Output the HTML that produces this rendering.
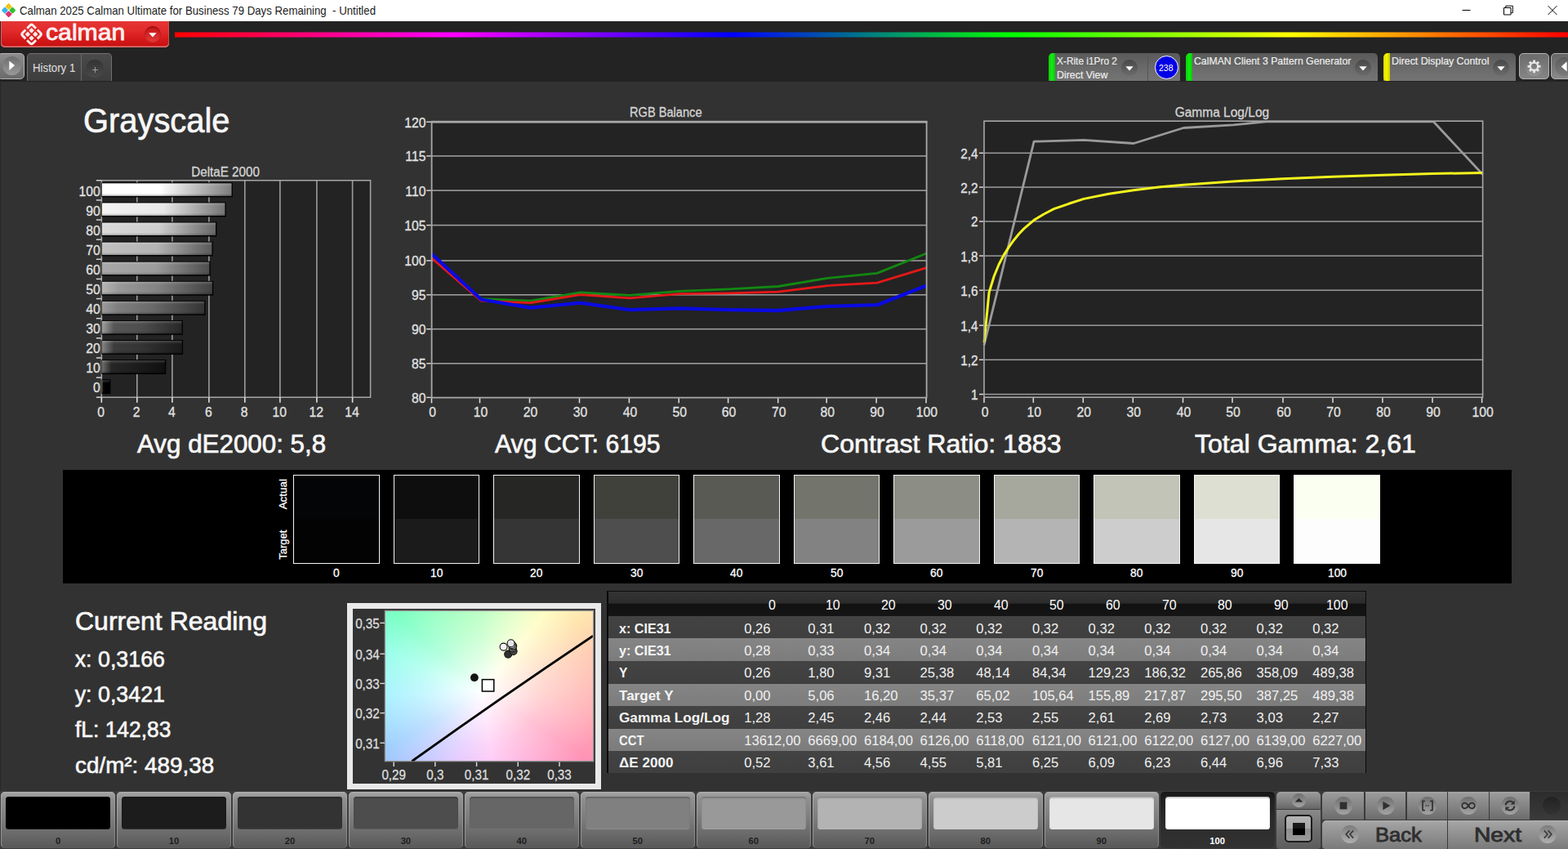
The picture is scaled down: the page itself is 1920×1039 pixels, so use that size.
<!DOCTYPE html>
<html lang="en"><head><meta charset="utf-8"><title>Calman 2025 - Grayscale</title>
<style>
*{margin:0;padding:0}
html,body{width:1920px;height:1039px;overflow:hidden;background:#323232}
body{position:relative;font-family:"Liberation Sans",sans-serif;-webkit-font-smoothing:antialiased}
.abs{position:absolute;display:block}
.t{position:absolute;white-space:nowrap;transform-origin:0 50%}
svg{position:absolute;overflow:visible}
svg text{font-family:"Liberation Sans",sans-serif}
#titlebar{position:absolute;left:0;top:0;width:1920px;height:25.6px;background:#fff}
#hdr{position:absolute;left:0;top:25.6px;width:1920px;height:74.2px;background:#232323}
#rainbow{position:absolute;left:214.3px;top:39px;width:1705.7px;height:7.2px;
 background:linear-gradient(rgba(35,35,35,.75) 0,rgba(35,35,35,0) 17%,rgba(35,35,35,0) 83%,rgba(35,35,35,.75) 100%),linear-gradient(90deg,#ff0000 0%,#ff00ff 20%,#0000ff 40%,#00ff00 60%,#ffff00 80%,#ff0000 100%)}
#redbtn{position:absolute;left:1px;top:25.6px;width:205.6px;height:32.9px;border-radius:0 0 5px 5px;
 background:linear-gradient(#e43535 0%,#e32b2b 35%,#d41919 70%,#c51010 100%);
 box-shadow:inset 0 -1.5px 0 #e07878, inset 1px 0 0 #e86060, inset -1px 0 0 #d05050}
#ledge{position:absolute;left:0;top:100px;width:1px;height:868px;background:#282828}

.pb{position:absolute;top:969.2px;height:69px;width:140px;border-radius:5px;box-sizing:border-box;
 background:linear-gradient(#b2b2b2 0,#a0a0a0 3%,#8f8f8f 12%,#7e7e7e 45%,#6a6a6a 75%,#585858 100%);
 box-shadow:inset 1.5px 0 1px -0.5px rgba(190,190,190,.55),inset -1.5px 0 1px -0.5px rgba(190,190,190,.4)}
.pb.sel{background:linear-gradient(#161616 0,#1f1f1f 12%,#2b2b2b 50%,#323232 100%);box-shadow:none}
.sw{position:absolute;top:974.9px;height:40.2px;width:128px;border-radius:3.5px;box-shadow:inset 0 1.5px 1.5px rgba(0,0,0,.28),inset 0 -1px 1px rgba(255,255,255,.10)}
.cb{position:absolute;box-sizing:border-box;background:linear-gradient(#a6a6a6 0,#969696 10%,#808080 55%,#666 100%)}
.cc{position:absolute;border-radius:50%;background:linear-gradient(#6e6e6e,#a4a4a4)}
</style></head>
<body>
<!-- p1_top -->
<div id="titlebar"></div>
<svg class="abs" style="left:0;top:0" width="26" height="26" viewBox="0 0 26 26">
<g transform="translate(10.6,12.6) rotate(45) scale(1.0)">
<rect x="-6.3" y="-6.3" width="6" height="6" rx="1" fill="#f2c315"/>
<rect x="0.3" y="-6.3" width="6" height="6" rx="1" fill="#2fc12f"/>
<rect x="-6.3" y="0.3" width="6" height="6" rx="1" fill="#35b4ee"/>
<rect x="0.3" y="0.3" width="6" height="6" rx="1" fill="#e52f6f"/>
</g></svg>
<div class="t" style="left:23.60px;top:5.58px;font-size:14.20px;line-height:14.20px;color:#1c1c1c;transform:scaleX(0.9324);white-space:pre;">Calman 2025 Calman Ultimate for Business 79 Days Remaining  - Untitled</div>
<svg class="abs" style="left:1760px;top:0" width="160" height="26" viewBox="0 0 160 26" fill="none" stroke="#000" stroke-width="1">
<path d="M30.5 12.5h10"/>
<path d="M81.5 9.5h8.5v8.5h-8.5z M83.8 9.5v-2.3h8.5v8.5h-2.3"/>
<path d="M135.6 7.2l10.8 10.8 M146.4 7.2l-10.8 10.8"/>
</svg>
<div id="hdr"></div>
<div id="ledge"></div>
<div id="rainbow"></div>
<div id="redbtn"></div>
<svg class="abs" style="left:20px;top:26px" width="40" height="33" viewBox="0 0 40 33">
<g transform="translate(18.6,15.95) rotate(45)" fill="#ffecec">
<path d="M1.25 -8.95L6.55 -8.95Q8.95 -8.95 8.95 -6.55L8.95 -1.25 M1.25 8.95L6.55 8.95Q8.95 8.95 8.95 6.55L8.95 1.25 M-1.25 8.95L-6.55 8.95Q-8.95 8.95 -8.95 6.55L-8.95 1.25 M-1.25 -8.95L-6.55 -8.95Q-8.95 -8.95 -8.95 -6.55L-8.95 -1.25" fill="none" stroke="#ffecec" stroke-width="2.9" stroke-linejoin="round" stroke-linecap="butt"/>
<rect x="-5.65" y="-5.65" width="4.70" height="4.70" rx="1"/><rect x="0.95" y="-5.65" width="4.70" height="4.70" rx="1"/><rect x="-5.65" y="0.95" width="4.70" height="4.70" rx="1"/><rect x="0.95" y="0.95" width="4.70" height="4.70" rx="1"/>
</g></svg>
<div class="t" style="left:56.40px;top:25.03px;font-size:28.20px;line-height:28.20px;color:#fff0f0;-webkit-text-stroke:0.8px #fff0f0;transform:scaleX(1.0714);">calman</div>
<div class="abs" style="left:177px;top:32px;width:20px;height:20px;border-radius:50%;background:linear-gradient(#c41414,#e23a3a);box-shadow:inset 0 1px 2px rgba(80,0,0,.5)"></div>
<svg class="abs" style="left:177px;top:32px" width="20" height="20"><path d="M5.3 8.2h9.4l-4.7 5.2z" fill="#fff"/></svg>
<div class="abs" style="left:-3px;top:65px;width:33.4px;height:31.8px;border-radius:5px;background:linear-gradient(#8d8d8d,#6a6a6a);border:1.6px solid #b4b4b4;box-sizing:border-box"></div>
<div class="abs" style="left:3px;top:69px;width:23px;height:23px;border-radius:50%;background:linear-gradient(#6e6e6e,#999)"></div>
<svg class="abs" style="left:3px;top:69px" width="23" height="23"><path d="M8.3 5.4l6.8 5.7-6.8 5.9z" fill="#fff"/></svg>
<div class="abs" style="left:33px;top:65px;width:104px;height:34.2px;border-radius:5px 5px 0 0;background:linear-gradient(#4a4a4a,#3d3d3d);border:1.7px solid #707070;border-bottom:none;box-sizing:border-box"></div>
<div class="abs" style="left:98.5px;top:66px;width:1.5px;height:33px;background:#6a6a6a"></div>
<div class="t" style="left:40.20px;top:76.10px;font-size:14.30px;line-height:14.30px;color:#dadada;-webkit-text-stroke:0.15px #dadada;transform:scaleX(0.9270);">History 1</div>
<div class="abs" style="left:105px;top:73px;width:22px;height:22px;border-radius:50%;background:linear-gradient(#333,#4a4a4a)"></div>
<svg class="abs" style="left:105px;top:73px" width="22" height="22"><path d="M11.5 9v7M8 12.5h7" stroke="#9a9a9a" stroke-width="1.1" fill="none"/></svg>
<div class="abs" style="left:1283.8px;top:65px;width:161.5px;height:34px;border-radius:5px 5px 0 0;background:linear-gradient(#595959,#6c6c6c 60%,#747474);overflow:hidden"><div style="position:absolute;left:0;top:0;width:8px;height:100%;border-radius:5px 0 0 4px;background:linear-gradient(90deg,#0cc80c,#10f010 50%,#0cc40c)"></div></div><div class="t" style="left:1294.00px;top:69.06px;font-size:12.10px;line-height:12.10px;color:#ececec;-webkit-text-stroke:0.2px #ececec;transform:scaleX(0.9825);">X-Rite i1Pro 2</div><div class="t" style="left:1294.00px;top:85.86px;font-size:12.10px;line-height:12.10px;color:#ececec;-webkit-text-stroke:0.2px #ececec;transform:scaleX(1.0251);">Direct View</div><div class="abs" style="left:1373px;top:72.5px;width:20px;height:20px;border-radius:50%;background:linear-gradient(#484848,#6c6c6c)"></div><svg class="abs" style="left:1373px;top:72.5px" width="20" height="20"><path d="M5.3 8.2h9.4l-4.7 5.2z" fill="#fff"/></svg>
<div class="abs" style="left:1404.5px;top:68px;width:1.5px;height:31px;background:#555"></div>
<div class="abs" style="left:1413.5px;top:67.5px;width:29px;height:29px;border-radius:50%;background:#0000e6;border:1.3px solid #fff;box-sizing:border-box"></div>
<div class="t" style="left:1419.25px;top:76.78px;font-size:11.60px;line-height:11.60px;color:#fff;transform:scaleX(0.9042);">238</div>
<div class="abs" style="left:1451.9px;top:65px;width:235.1px;height:34px;border-radius:5px 5px 0 0;background:linear-gradient(#595959,#6c6c6c 60%,#747474);overflow:hidden"><div style="position:absolute;left:0;top:0;width:8px;height:100%;border-radius:5px 0 0 4px;background:linear-gradient(90deg,#0cc80c,#10f010 50%,#0cc40c)"></div></div><div class="t" style="left:1462.10px;top:69.06px;font-size:12.10px;line-height:12.10px;color:#ececec;-webkit-text-stroke:0.2px #ececec;transform:scaleX(1.0150);">CalMAN Client 3 Pattern Generator</div><div class="abs" style="left:1659px;top:72.5px;width:20px;height:20px;border-radius:50%;background:linear-gradient(#484848,#6c6c6c)"></div><svg class="abs" style="left:1659px;top:72.5px" width="20" height="20"><path d="M5.3 8.2h9.4l-4.7 5.2z" fill="#fff"/></svg>
<div class="abs" style="left:1694px;top:65px;width:162px;height:34px;border-radius:5px 5px 0 0;background:linear-gradient(#595959,#6c6c6c 60%,#747474);overflow:hidden"><div style="position:absolute;left:0;top:0;width:8px;height:100%;border-radius:5px 0 0 4px;background:linear-gradient(90deg,#d8d800,#f6f600 50%,#c8c800)"></div></div><div class="t" style="left:1704.20px;top:69.06px;font-size:12.10px;line-height:12.10px;color:#ececec;-webkit-text-stroke:0.2px #ececec;transform:scaleX(1.0213);">Direct Display Control</div><div class="abs" style="left:1827.5px;top:72.5px;width:20px;height:20px;border-radius:50%;background:linear-gradient(#484848,#6c6c6c)"></div><svg class="abs" style="left:1827.5px;top:72.5px" width="20" height="20"><path d="M5.3 8.2h9.4l-4.7 5.2z" fill="#fff"/></svg>
<div class="abs" style="left:1860px;top:65px;width:37px;height:32px;border-radius:5px;background:linear-gradient(#6c6c6c,#858585);border:1.5px solid #b4b4b4;box-sizing:border-box"></div>
<div class="abs" style="left:1867px;top:69.5px;width:23px;height:23px;border-radius:50%;background:linear-gradient(#6a6a6a,#929292)"></div>
<svg class="abs" style="left:1867px;top:69.5px" width="23" height="23" viewBox="-11.5 -11.5 23 23">
<g fill="#e6e6e6" transform="translate(0,-0.2)"><circle r="4.7" fill="none" stroke="#e6e6e6" stroke-width="2.3"/>
<rect x="-1.5" y="-7.9" width="3" height="2.6" rx=".4" transform="rotate(0)"/><rect x="-1.5" y="-7.9" width="3" height="2.6" rx=".4" transform="rotate(45)"/><rect x="-1.5" y="-7.9" width="3" height="2.6" rx=".4" transform="rotate(90)"/><rect x="-1.5" y="-7.9" width="3" height="2.6" rx=".4" transform="rotate(135)"/><rect x="-1.5" y="-7.9" width="3" height="2.6" rx=".4" transform="rotate(180)"/><rect x="-1.5" y="-7.9" width="3" height="2.6" rx=".4" transform="rotate(225)"/><rect x="-1.5" y="-7.9" width="3" height="2.6" rx=".4" transform="rotate(270)"/><rect x="-1.5" y="-7.9" width="3" height="2.6" rx=".4" transform="rotate(315)"/>
</g></svg>
<div class="abs" style="left:1899px;top:65px;width:33px;height:32px;border-radius:5px;background:linear-gradient(#666,#8a8a8a);border:1.5px solid #b0b0b0;box-sizing:border-box"></div>
<div class="abs" style="left:1903.5px;top:69.5px;width:23px;height:23px;border-radius:50%;background:linear-gradient(#5c5c5c,#7c7c7c)"></div>
<svg class="abs" style="left:1903.5px;top:69.5px" width="17" height="23"><path d="M14.6 5.2v12.4l-6.8-6.2z" fill="#fff"/></svg>
<!-- p2_charts -->
<div class="t" style="left:101.80px;top:126.58px;font-size:42.20px;line-height:42.20px;color:#f7f7f7;-webkit-text-stroke:0.7px #f7f7f7;transform:scaleX(0.9454);">Grayscale</div>
<div class="t" style="left:168.30px;top:528.40px;font-size:30.60px;line-height:30.60px;color:#f7f7f7;-webkit-text-stroke:0.7px #f7f7f7;transform:scaleX(1.0243);">Avg dE2000: 5,8</div>
<div class="t" style="left:605.90px;top:528.40px;font-size:30.60px;line-height:30.60px;color:#f7f7f7;-webkit-text-stroke:0.7px #f7f7f7;transform:scaleX(0.9871);">Avg CCT: 6195</div>
<div class="t" style="left:1004.60px;top:528.40px;font-size:30.60px;line-height:30.60px;color:#f7f7f7;-webkit-text-stroke:0.7px #f7f7f7;transform:scaleX(1.0497);">Contrast Ratio: 1883</div>
<div class="t" style="left:1463.30px;top:528.40px;font-size:30.60px;line-height:30.60px;color:#f7f7f7;-webkit-text-stroke:0.7px #f7f7f7;transform:scaleX(1.0483);">Total Gamma: 2,61</div>
<svg class="abs" style="left:0;top:0" width="1920" height="1039" viewBox="0 0 1920 1039">
<defs>
<linearGradient id="bg0" x1="0" x2="1" y1="0" y2="0"><stop offset="0" stop-color="rgb(255,255,255)"/><stop offset="0.45" stop-color="rgb(255,255,255)"/><stop offset="1" stop-color="rgb(125,125,125)"/></linearGradient>
<linearGradient id="bg1" x1="0" x2="1" y1="0" y2="0"><stop offset="0" stop-color="rgb(244,244,244)"/><stop offset="0.15" stop-color="rgb(240,240,240)"/><stop offset="0.5" stop-color="rgb(232,232,232)"/><stop offset="1" stop-color="rgb(116,116,116)"/></linearGradient>
<linearGradient id="bg2" x1="0" x2="1" y1="0" y2="0"><stop offset="0" stop-color="rgb(218,218,218)"/><stop offset="0.15" stop-color="rgb(214,214,214)"/><stop offset="0.5" stop-color="rgb(206,206,206)"/><stop offset="1" stop-color="rgb(103,103,103)"/></linearGradient>
<linearGradient id="bg3" x1="0" x2="1" y1="0" y2="0"><stop offset="0" stop-color="rgb(192,192,192)"/><stop offset="0.15" stop-color="rgb(188,188,188)"/><stop offset="0.5" stop-color="rgb(180,180,180)"/><stop offset="1" stop-color="rgb(90,90,90)"/></linearGradient>
<linearGradient id="bg4" x1="0" x2="1" y1="0" y2="0"><stop offset="0" stop-color="rgb(168,168,168)"/><stop offset="0.15" stop-color="rgb(164,164,164)"/><stop offset="0.5" stop-color="rgb(156,156,156)"/><stop offset="1" stop-color="rgb(78,78,78)"/></linearGradient>
<linearGradient id="bg5" x1="0" x2="1" y1="0" y2="0"><stop offset="0" stop-color="rgb(181,181,181)"/><stop offset="0.15" stop-color="rgb(153,153,153)"/><stop offset="0.5" stop-color="rgb(131,131,131)"/><stop offset="1" stop-color="rgb(65,65,65)"/></linearGradient>
<linearGradient id="bg6" x1="0" x2="1" y1="0" y2="0"><stop offset="0" stop-color="rgb(155,155,155)"/><stop offset="0.15" stop-color="rgb(127,127,127)"/><stop offset="0.5" stop-color="rgb(105,105,105)"/><stop offset="1" stop-color="rgb(52,52,52)"/></linearGradient>
<linearGradient id="bg7" x1="0" x2="1" y1="0" y2="0"><stop offset="0" stop-color="rgb(158,158,158)"/><stop offset="0.15" stop-color="rgb(86,86,86)"/><stop offset="0.5" stop-color="rgb(78,78,78)"/><stop offset="1" stop-color="rgb(39,39,39)"/></linearGradient>
<linearGradient id="bg8" x1="0" x2="1" y1="0" y2="0"><stop offset="0" stop-color="rgb(132,132,132)"/><stop offset="0.15" stop-color="rgb(60,60,60)"/><stop offset="0.5" stop-color="rgb(52,52,52)"/><stop offset="1" stop-color="rgb(26,26,26)"/></linearGradient>
<linearGradient id="bg9" x1="0" x2="1" y1="0" y2="0"><stop offset="0" stop-color="rgb(110,110,110)"/><stop offset="0.15" stop-color="rgb(38,38,38)"/><stop offset="0.5" stop-color="rgb(30,30,30)"/><stop offset="1" stop-color="rgb(15,15,15)"/></linearGradient>
<linearGradient id="bg10" x1="0" x2="1" y1="0" y2="0"><stop offset="0" stop-color="rgb(80,80,80)"/><stop offset="0.15" stop-color="rgb(8,8,8)"/><stop offset="0.5" stop-color="rgb(0,0,0)"/><stop offset="1" stop-color="rgb(0,0,0)"/></linearGradient>
<linearGradient id="bsh" x1="0" x2="0" y1="0" y2="1"><stop offset="0" stop-color="#fff" stop-opacity=".18"/><stop offset=".25" stop-color="#fff" stop-opacity="0"/><stop offset=".8" stop-color="#000" stop-opacity="0"/><stop offset="1" stop-color="#000" stop-opacity=".22"/></linearGradient>
</defs>
<rect x="124.40" y="220.80" width="329.20" height="265.40" fill="#232323"/>
<rect x="167.00" y="220.80" width="1.6" height="265.40" fill="#9c9c9c"/>
<rect x="210.10" y="220.80" width="1.6" height="265.40" fill="#9c9c9c"/>
<rect x="255.10" y="220.80" width="1.6" height="265.40" fill="#9c9c9c"/>
<rect x="299.00" y="220.80" width="1.6" height="265.40" fill="#9c9c9c"/>
<rect x="342.10" y="220.80" width="1.6" height="265.40" fill="#9c9c9c"/>
<rect x="387.10" y="220.80" width="1.6" height="265.40" fill="#9c9c9c"/>
<rect x="430.80" y="220.80" width="1.6" height="265.40" fill="#9c9c9c"/>
<rect x="124.40" y="220.80" width="329.20" height="265.40" fill="none" stroke="#a8a8a8" stroke-width="1.5"/>
<rect x="124.40" y="223.40" width="160.47" height="17.90" fill="#000"/>
<rect x="125.00" y="224.40" width="158.57" height="15.40" fill="url(#bg0)"/>
<rect x="125.00" y="224.40" width="158.57" height="15.40" fill="url(#bsh)"/>
<rect x="124.40" y="247.48" width="152.35" height="17.90" fill="#000"/>
<rect x="125.00" y="248.48" width="150.45" height="15.40" fill="url(#bg1)"/>
<rect x="125.00" y="248.48" width="150.45" height="15.40" fill="url(#bsh)"/>
<rect x="124.40" y="271.56" width="140.94" height="17.90" fill="#000"/>
<rect x="125.00" y="272.56" width="139.04" height="15.40" fill="url(#bg2)"/>
<rect x="125.00" y="272.56" width="139.04" height="15.40" fill="url(#bsh)"/>
<rect x="124.40" y="295.64" width="136.33" height="17.90" fill="#000"/>
<rect x="125.00" y="296.64" width="134.43" height="15.40" fill="url(#bg3)"/>
<rect x="125.00" y="296.64" width="134.43" height="15.40" fill="url(#bsh)"/>
<rect x="124.40" y="319.72" width="133.26" height="17.90" fill="#000"/>
<rect x="125.00" y="320.72" width="131.36" height="15.40" fill="url(#bg4)"/>
<rect x="125.00" y="320.72" width="131.36" height="15.40" fill="url(#bsh)"/>
<rect x="124.40" y="343.80" width="136.77" height="17.90" fill="#000"/>
<rect x="125.00" y="344.80" width="134.87" height="15.40" fill="url(#bg5)"/>
<rect x="125.00" y="344.80" width="134.87" height="15.40" fill="url(#bsh)"/>
<rect x="124.40" y="367.88" width="127.11" height="17.90" fill="#000"/>
<rect x="125.00" y="368.88" width="125.21" height="15.40" fill="url(#bg6)"/>
<rect x="125.00" y="368.88" width="125.21" height="15.40" fill="url(#bsh)"/>
<rect x="124.40" y="391.96" width="99.46" height="17.90" fill="#000"/>
<rect x="125.00" y="392.96" width="97.56" height="15.40" fill="url(#bg7)"/>
<rect x="125.00" y="392.96" width="97.56" height="15.40" fill="url(#bsh)"/>
<rect x="124.40" y="416.04" width="99.68" height="17.90" fill="#000"/>
<rect x="125.00" y="417.04" width="97.78" height="15.40" fill="url(#bg8)"/>
<rect x="125.00" y="417.04" width="97.78" height="15.40" fill="url(#bsh)"/>
<rect x="124.40" y="440.12" width="78.83" height="17.90" fill="#000"/>
<rect x="125.00" y="441.12" width="76.93" height="15.40" fill="url(#bg9)"/>
<rect x="125.00" y="441.12" width="76.93" height="15.40" fill="url(#bsh)"/>
<rect x="124.40" y="464.20" width="11.01" height="17.90" fill="#000"/>
<rect x="125.00" y="465.20" width="9.11" height="15.40" fill="url(#bg10)"/>
<rect x="125.00" y="465.20" width="9.11" height="15.40" fill="url(#bsh)"/>
<rect x="117.90" y="220.10" width="6" height="1.4" fill="#e0e0e0"/>
<rect x="117.90" y="244.23" width="6" height="1.4" fill="#e0e0e0"/>
<rect x="117.90" y="268.35" width="6" height="1.4" fill="#e0e0e0"/>
<rect x="117.90" y="292.48" width="6" height="1.4" fill="#e0e0e0"/>
<rect x="117.90" y="316.61" width="6" height="1.4" fill="#e0e0e0"/>
<rect x="117.90" y="340.74" width="6" height="1.4" fill="#e0e0e0"/>
<rect x="117.90" y="364.86" width="6" height="1.4" fill="#e0e0e0"/>
<rect x="117.90" y="388.99" width="6" height="1.4" fill="#e0e0e0"/>
<rect x="117.90" y="413.12" width="6" height="1.4" fill="#e0e0e0"/>
<rect x="117.90" y="437.25" width="6" height="1.4" fill="#e0e0e0"/>
<rect x="117.90" y="461.37" width="6" height="1.4" fill="#e0e0e0"/>
<rect x="117.90" y="485.50" width="6" height="1.4" fill="#e0e0e0"/>
<text x="122.80" y="239.70" font-size="17.20" fill="#e2e2e2" text-anchor="end" stroke="#e2e2e2" stroke-width="0.3" textLength="26.26" lengthAdjust="spacingAndGlyphs" >100</text>
<text x="122.80" y="263.76" font-size="17.20" fill="#e2e2e2" text-anchor="end" stroke="#e2e2e2" stroke-width="0.3" textLength="17.51" lengthAdjust="spacingAndGlyphs" >90</text>
<text x="122.80" y="287.82" font-size="17.20" fill="#e2e2e2" text-anchor="end" stroke="#e2e2e2" stroke-width="0.3" textLength="17.51" lengthAdjust="spacingAndGlyphs" >80</text>
<text x="122.80" y="311.88" font-size="17.20" fill="#e2e2e2" text-anchor="end" stroke="#e2e2e2" stroke-width="0.3" textLength="17.51" lengthAdjust="spacingAndGlyphs" >70</text>
<text x="122.80" y="335.94" font-size="17.20" fill="#e2e2e2" text-anchor="end" stroke="#e2e2e2" stroke-width="0.3" textLength="17.51" lengthAdjust="spacingAndGlyphs" >60</text>
<text x="122.80" y="360.00" font-size="17.20" fill="#e2e2e2" text-anchor="end" stroke="#e2e2e2" stroke-width="0.3" textLength="17.51" lengthAdjust="spacingAndGlyphs" >50</text>
<text x="122.80" y="384.06" font-size="17.20" fill="#e2e2e2" text-anchor="end" stroke="#e2e2e2" stroke-width="0.3" textLength="17.51" lengthAdjust="spacingAndGlyphs" >40</text>
<text x="122.80" y="408.12" font-size="17.20" fill="#e2e2e2" text-anchor="end" stroke="#e2e2e2" stroke-width="0.3" textLength="17.51" lengthAdjust="spacingAndGlyphs" >30</text>
<text x="122.80" y="432.18" font-size="17.20" fill="#e2e2e2" text-anchor="end" stroke="#e2e2e2" stroke-width="0.3" textLength="17.51" lengthAdjust="spacingAndGlyphs" >20</text>
<text x="122.80" y="456.24" font-size="17.20" fill="#e2e2e2" text-anchor="end" stroke="#e2e2e2" stroke-width="0.3" textLength="17.51" lengthAdjust="spacingAndGlyphs" >10</text>
<text x="122.80" y="480.30" font-size="17.20" fill="#e2e2e2" text-anchor="end" stroke="#e2e2e2" stroke-width="0.3" textLength="8.75" lengthAdjust="spacingAndGlyphs" >0</text>
<rect x="123.50" y="486.20" width="1.6" height="6.5" fill="#e0e0e0"/>
<text x="123.70" y="510.00" font-size="17.20" fill="#e2e2e2" text-anchor="middle" stroke="#e2e2e2" stroke-width="0.3" textLength="8.75" lengthAdjust="spacingAndGlyphs" >0</text>
<rect x="167.00" y="486.20" width="1.6" height="6.5" fill="#e0e0e0"/>
<text x="167.20" y="510.00" font-size="17.20" fill="#e2e2e2" text-anchor="middle" stroke="#e2e2e2" stroke-width="0.3" textLength="8.75" lengthAdjust="spacingAndGlyphs" >2</text>
<rect x="210.10" y="486.20" width="1.6" height="6.5" fill="#e0e0e0"/>
<text x="210.30" y="510.00" font-size="17.20" fill="#e2e2e2" text-anchor="middle" stroke="#e2e2e2" stroke-width="0.3" textLength="8.75" lengthAdjust="spacingAndGlyphs" >4</text>
<rect x="255.10" y="486.20" width="1.6" height="6.5" fill="#e0e0e0"/>
<text x="255.30" y="510.00" font-size="17.20" fill="#e2e2e2" text-anchor="middle" stroke="#e2e2e2" stroke-width="0.3" textLength="8.75" lengthAdjust="spacingAndGlyphs" >6</text>
<rect x="299.00" y="486.20" width="1.6" height="6.5" fill="#e0e0e0"/>
<text x="299.20" y="510.00" font-size="17.20" fill="#e2e2e2" text-anchor="middle" stroke="#e2e2e2" stroke-width="0.3" textLength="8.75" lengthAdjust="spacingAndGlyphs" >8</text>
<rect x="342.10" y="486.20" width="1.6" height="6.5" fill="#e0e0e0"/>
<text x="342.30" y="510.00" font-size="17.20" fill="#e2e2e2" text-anchor="middle" stroke="#e2e2e2" stroke-width="0.3" textLength="17.51" lengthAdjust="spacingAndGlyphs" >10</text>
<rect x="387.10" y="486.20" width="1.6" height="6.5" fill="#e0e0e0"/>
<text x="387.30" y="510.00" font-size="17.20" fill="#e2e2e2" text-anchor="middle" stroke="#e2e2e2" stroke-width="0.3" textLength="17.51" lengthAdjust="spacingAndGlyphs" >12</text>
<rect x="430.80" y="486.20" width="1.6" height="6.5" fill="#e0e0e0"/>
<text x="431.00" y="510.00" font-size="17.20" fill="#e2e2e2" text-anchor="middle" stroke="#e2e2e2" stroke-width="0.3" textLength="17.51" lengthAdjust="spacingAndGlyphs" >14</text>
<text x="276.10" y="215.80" font-size="15.60" fill="#d4d4d4" text-anchor="middle" stroke="#d4d4d4" stroke-width="0.3" textLength="83.80" lengthAdjust="spacingAndGlyphs" >DeltaE 2000</text>
</svg>
<svg class="abs" style="left:0;top:0" width="1920" height="1039" viewBox="0 0 1920 1039">
<rect x="528.60" y="149.40" width="606.00" height="337.20" fill="#232323"/>
<rect x="528.60" y="444.00" width="606.00" height="1.6" fill="#9c9c9c"/>
<rect x="528.60" y="401.90" width="606.00" height="1.6" fill="#9c9c9c"/>
<rect x="528.60" y="360.00" width="606.00" height="1.6" fill="#9c9c9c"/>
<rect x="528.60" y="318.20" width="606.00" height="1.6" fill="#9c9c9c"/>
<rect x="528.60" y="274.80" width="606.00" height="1.6" fill="#9c9c9c"/>
<rect x="528.60" y="232.30" width="606.00" height="1.6" fill="#9c9c9c"/>
<rect x="528.60" y="190.10" width="606.00" height="1.6" fill="#9c9c9c"/>
<clipPath id="rgbclip"><rect x="527.10" y="149.40" width="609.00" height="337.20"/></clipPath>
<polyline points="528.6,313.3 589.2,365.6 649.8,368.2 710.4,358.0 771.0,361.4 831.6,356.4 892.2,353.8 952.8,350.5 1013.4,340.3 1074.0,334.4 1134.6,310.0" fill="none" stroke="#128812" stroke-width="2.8" stroke-linejoin="round" clip-path="url(#rgbclip)"/>
<polyline points="528.6,315.9 589.2,368.2 649.8,370.7 710.4,360.6 771.0,364.8 831.6,359.7 892.2,358.9 952.8,357.2 1013.4,349.6 1074.0,346.2 1134.6,327.7" fill="none" stroke="#e41818" stroke-width="2.8" stroke-linejoin="round" clip-path="url(#rgbclip)"/>
<polyline points="528.6,310.8 589.2,366.5 649.8,376.6 710.4,370.7 771.0,379.1 831.6,377.4 892.2,379.1 952.8,380.0 1013.4,374.9 1074.0,373.2 1134.6,349.6" fill="none" stroke="#0a0ae0" stroke-width="4.3" stroke-linejoin="round" clip-path="url(#rgbclip)"/>
<rect x="528.60" y="149.40" width="606.00" height="337.20" fill="none" stroke="#a8a8a8" stroke-width="1.8"/>
<rect x="527.70" y="147.80" width="607.80" height="2.6" fill="#a8a8a8"/>
<rect x="522.20" y="485.70" width="5.5" height="1.4" fill="#e0e0e0"/>
<text x="521.40" y="492.80" font-size="17.20" fill="#e2e2e2" text-anchor="end" stroke="#e2e2e2" stroke-width="0.3" textLength="17.51" lengthAdjust="spacingAndGlyphs" >80</text>
<rect x="522.20" y="444.10" width="5.5" height="1.4" fill="#e0e0e0"/>
<text x="521.40" y="451.20" font-size="17.20" fill="#e2e2e2" text-anchor="end" stroke="#e2e2e2" stroke-width="0.3" textLength="17.51" lengthAdjust="spacingAndGlyphs" >85</text>
<rect x="522.20" y="402.00" width="5.5" height="1.4" fill="#e0e0e0"/>
<text x="521.40" y="409.10" font-size="17.20" fill="#e2e2e2" text-anchor="end" stroke="#e2e2e2" stroke-width="0.3" textLength="17.51" lengthAdjust="spacingAndGlyphs" >90</text>
<rect x="522.20" y="360.10" width="5.5" height="1.4" fill="#e0e0e0"/>
<text x="521.40" y="367.20" font-size="17.20" fill="#e2e2e2" text-anchor="end" stroke="#e2e2e2" stroke-width="0.3" textLength="17.51" lengthAdjust="spacingAndGlyphs" >95</text>
<rect x="522.20" y="318.30" width="5.5" height="1.4" fill="#e0e0e0"/>
<text x="521.40" y="325.40" font-size="17.20" fill="#e2e2e2" text-anchor="end" stroke="#e2e2e2" stroke-width="0.3" textLength="26.26" lengthAdjust="spacingAndGlyphs" >100</text>
<rect x="522.20" y="274.90" width="5.5" height="1.4" fill="#e0e0e0"/>
<text x="521.40" y="282.00" font-size="17.20" fill="#e2e2e2" text-anchor="end" stroke="#e2e2e2" stroke-width="0.3" textLength="26.26" lengthAdjust="spacingAndGlyphs" >105</text>
<rect x="522.20" y="232.40" width="5.5" height="1.4" fill="#e0e0e0"/>
<text x="521.40" y="239.50" font-size="17.20" fill="#e2e2e2" text-anchor="end" stroke="#e2e2e2" stroke-width="0.3" textLength="25.09" lengthAdjust="spacingAndGlyphs" >110</text>
<rect x="522.20" y="190.20" width="5.5" height="1.4" fill="#e0e0e0"/>
<text x="521.40" y="197.30" font-size="17.20" fill="#e2e2e2" text-anchor="end" stroke="#e2e2e2" stroke-width="0.3" textLength="25.09" lengthAdjust="spacingAndGlyphs" >115</text>
<rect x="522.20" y="148.50" width="5.5" height="1.4" fill="#e0e0e0"/>
<text x="521.40" y="155.60" font-size="17.20" fill="#e2e2e2" text-anchor="end" stroke="#e2e2e2" stroke-width="0.3" textLength="26.26" lengthAdjust="spacingAndGlyphs" >120</text>
<rect x="527.75" y="487.30" width="1.5" height="6" fill="#e0e0e0"/>
<text x="529.50" y="510.00" font-size="17.20" fill="#e2e2e2" text-anchor="middle" stroke="#e2e2e2" stroke-width="0.3" textLength="8.75" lengthAdjust="spacingAndGlyphs" >0</text>
<rect x="586.75" y="487.30" width="1.5" height="6" fill="#e0e0e0"/>
<text x="588.50" y="510.00" font-size="17.20" fill="#e2e2e2" text-anchor="middle" stroke="#e2e2e2" stroke-width="0.3" textLength="17.51" lengthAdjust="spacingAndGlyphs" >10</text>
<rect x="647.75" y="487.30" width="1.5" height="6" fill="#e0e0e0"/>
<text x="649.50" y="510.00" font-size="17.20" fill="#e2e2e2" text-anchor="middle" stroke="#e2e2e2" stroke-width="0.3" textLength="17.51" lengthAdjust="spacingAndGlyphs" >20</text>
<rect x="708.75" y="487.30" width="1.5" height="6" fill="#e0e0e0"/>
<text x="710.50" y="510.00" font-size="17.20" fill="#e2e2e2" text-anchor="middle" stroke="#e2e2e2" stroke-width="0.3" textLength="17.51" lengthAdjust="spacingAndGlyphs" >30</text>
<rect x="769.65" y="487.30" width="1.5" height="6" fill="#e0e0e0"/>
<text x="771.40" y="510.00" font-size="17.20" fill="#e2e2e2" text-anchor="middle" stroke="#e2e2e2" stroke-width="0.3" textLength="17.51" lengthAdjust="spacingAndGlyphs" >40</text>
<rect x="830.45" y="487.30" width="1.5" height="6" fill="#e0e0e0"/>
<text x="832.20" y="510.00" font-size="17.20" fill="#e2e2e2" text-anchor="middle" stroke="#e2e2e2" stroke-width="0.3" textLength="17.51" lengthAdjust="spacingAndGlyphs" >50</text>
<rect x="890.85" y="487.30" width="1.5" height="6" fill="#e0e0e0"/>
<text x="892.60" y="510.00" font-size="17.20" fill="#e2e2e2" text-anchor="middle" stroke="#e2e2e2" stroke-width="0.3" textLength="17.51" lengthAdjust="spacingAndGlyphs" >60</text>
<rect x="951.95" y="487.30" width="1.5" height="6" fill="#e0e0e0"/>
<text x="953.70" y="510.00" font-size="17.20" fill="#e2e2e2" text-anchor="middle" stroke="#e2e2e2" stroke-width="0.3" textLength="17.51" lengthAdjust="spacingAndGlyphs" >70</text>
<rect x="1011.45" y="487.30" width="1.5" height="6" fill="#e0e0e0"/>
<text x="1013.20" y="510.00" font-size="17.20" fill="#e2e2e2" text-anchor="middle" stroke="#e2e2e2" stroke-width="0.3" textLength="17.51" lengthAdjust="spacingAndGlyphs" >80</text>
<rect x="1072.35" y="487.30" width="1.5" height="6" fill="#e0e0e0"/>
<text x="1074.10" y="510.00" font-size="17.20" fill="#e2e2e2" text-anchor="middle" stroke="#e2e2e2" stroke-width="0.3" textLength="17.51" lengthAdjust="spacingAndGlyphs" >90</text>
<rect x="1133.25" y="487.30" width="1.5" height="6" fill="#e0e0e0"/>
<text x="1135.00" y="510.00" font-size="17.20" fill="#e2e2e2" text-anchor="middle" stroke="#e2e2e2" stroke-width="0.3" textLength="26.26" lengthAdjust="spacingAndGlyphs" >100</text>
<text x="815.30" y="143.20" font-size="15.60" fill="#d4d4d4" text-anchor="middle" stroke="#d4d4d4" stroke-width="0.3" textLength="88.50" lengthAdjust="spacingAndGlyphs" >RGB Balance</text>
</svg>
<svg class="abs" style="left:0;top:0" width="1920" height="1039" viewBox="0 0 1920 1039">
<rect x="1205.00" y="148.20" width="610.60" height="338.00" fill="#232323"/>
<rect x="1205.00" y="481.75" width="610.60" height="1.5" fill="#9c9c9c"/>
<rect x="1205.00" y="439.55" width="610.60" height="1.5" fill="#9c9c9c"/>
<rect x="1205.00" y="397.45" width="610.60" height="1.5" fill="#9c9c9c"/>
<rect x="1205.00" y="354.45" width="610.60" height="1.5" fill="#9c9c9c"/>
<rect x="1205.00" y="312.35" width="610.60" height="1.5" fill="#9c9c9c"/>
<rect x="1205.00" y="270.25" width="610.60" height="1.5" fill="#9c9c9c"/>
<rect x="1205.00" y="228.35" width="610.60" height="1.5" fill="#9c9c9c"/>
<rect x="1205.00" y="186.55" width="610.60" height="1.5" fill="#9c9c9c"/>
<clipPath id="gclip"><rect x="1203.00" y="147.70" width="614.60" height="339.00"/></clipPath>
<polyline points="1205.0,422.4 1266.1,173.2 1327.1,171.3 1388.2,175.5 1449.2,156.5 1510.3,152.9 1550.6,148.8 1755.2,148.8 1815.6,213.5" fill="none" stroke="#9a9a9a" stroke-width="2.8" stroke-linejoin="round" clip-path="url(#gclip)"/>
<polyline points="1205.0,419.2 1211.1,358.0 1217.2,338.0 1223.3,323.2 1229.4,311.6 1235.5,302.1 1241.6,293.7 1247.7,286.3 1253.8,279.9 1266.1,269.4 1278.3,262.0 1290.5,255.7 1308.8,249.3 1327.1,243.4 1357.7,237.3 1388.2,232.7 1418.7,229.1 1449.2,226.3 1510.3,221.9 1571.4,218.8 1632.4,216.2 1693.5,214.3 1754.5,212.6 1815.6,211.4" fill="none" stroke="#f4f41e" stroke-width="3" stroke-linejoin="round" clip-path="url(#gclip)"/>
<rect x="1205.00" y="148.20" width="610.60" height="338.00" fill="none" stroke="#a8a8a8" stroke-width="1.6"/>
<rect x="1199.00" y="481.80" width="5" height="1.4" fill="#e0e0e0"/>
<text x="1197.60" y="488.90" font-size="17.20" fill="#e2e2e2" text-anchor="end" stroke="#e2e2e2" stroke-width="0.3" textLength="8.51" lengthAdjust="spacingAndGlyphs" >1</text>
<rect x="1199.00" y="439.60" width="5" height="1.4" fill="#e0e0e0"/>
<text x="1197.60" y="446.70" font-size="17.20" fill="#e2e2e2" text-anchor="end" stroke="#e2e2e2" stroke-width="0.3" textLength="21.28" lengthAdjust="spacingAndGlyphs" >1,2</text>
<rect x="1199.00" y="397.50" width="5" height="1.4" fill="#e0e0e0"/>
<text x="1197.60" y="404.60" font-size="17.20" fill="#e2e2e2" text-anchor="end" stroke="#e2e2e2" stroke-width="0.3" textLength="21.28" lengthAdjust="spacingAndGlyphs" >1,4</text>
<rect x="1199.00" y="354.50" width="5" height="1.4" fill="#e0e0e0"/>
<text x="1197.60" y="361.60" font-size="17.20" fill="#e2e2e2" text-anchor="end" stroke="#e2e2e2" stroke-width="0.3" textLength="21.28" lengthAdjust="spacingAndGlyphs" >1,6</text>
<rect x="1199.00" y="312.40" width="5" height="1.4" fill="#e0e0e0"/>
<text x="1197.60" y="319.50" font-size="17.20" fill="#e2e2e2" text-anchor="end" stroke="#e2e2e2" stroke-width="0.3" textLength="21.28" lengthAdjust="spacingAndGlyphs" >1,8</text>
<rect x="1199.00" y="270.30" width="5" height="1.4" fill="#e0e0e0"/>
<text x="1197.60" y="277.40" font-size="17.20" fill="#e2e2e2" text-anchor="end" stroke="#e2e2e2" stroke-width="0.3" textLength="8.51" lengthAdjust="spacingAndGlyphs" >2</text>
<rect x="1199.00" y="228.40" width="5" height="1.4" fill="#e0e0e0"/>
<text x="1197.60" y="235.50" font-size="17.20" fill="#e2e2e2" text-anchor="end" stroke="#e2e2e2" stroke-width="0.3" textLength="21.28" lengthAdjust="spacingAndGlyphs" >2,2</text>
<rect x="1199.00" y="186.60" width="5" height="1.4" fill="#e0e0e0"/>
<text x="1197.60" y="193.70" font-size="17.20" fill="#e2e2e2" text-anchor="end" stroke="#e2e2e2" stroke-width="0.3" textLength="21.28" lengthAdjust="spacingAndGlyphs" >2,4</text>
<rect x="1204.25" y="486.90" width="1.5" height="6" fill="#e0e0e0"/>
<text x="1206.00" y="510.00" font-size="17.20" fill="#e2e2e2" text-anchor="middle" stroke="#e2e2e2" stroke-width="0.3" textLength="8.75" lengthAdjust="spacingAndGlyphs" >0</text>
<rect x="1264.55" y="486.90" width="1.5" height="6" fill="#e0e0e0"/>
<text x="1266.30" y="510.00" font-size="17.20" fill="#e2e2e2" text-anchor="middle" stroke="#e2e2e2" stroke-width="0.3" textLength="17.51" lengthAdjust="spacingAndGlyphs" >10</text>
<rect x="1325.55" y="486.90" width="1.5" height="6" fill="#e0e0e0"/>
<text x="1327.30" y="510.00" font-size="17.20" fill="#e2e2e2" text-anchor="middle" stroke="#e2e2e2" stroke-width="0.3" textLength="17.51" lengthAdjust="spacingAndGlyphs" >20</text>
<rect x="1386.55" y="486.90" width="1.5" height="6" fill="#e0e0e0"/>
<text x="1388.30" y="510.00" font-size="17.20" fill="#e2e2e2" text-anchor="middle" stroke="#e2e2e2" stroke-width="0.3" textLength="17.51" lengthAdjust="spacingAndGlyphs" >30</text>
<rect x="1447.75" y="486.90" width="1.5" height="6" fill="#e0e0e0"/>
<text x="1449.50" y="510.00" font-size="17.20" fill="#e2e2e2" text-anchor="middle" stroke="#e2e2e2" stroke-width="0.3" textLength="17.51" lengthAdjust="spacingAndGlyphs" >40</text>
<rect x="1508.25" y="486.90" width="1.5" height="6" fill="#e0e0e0"/>
<text x="1510.00" y="510.00" font-size="17.20" fill="#e2e2e2" text-anchor="middle" stroke="#e2e2e2" stroke-width="0.3" textLength="17.51" lengthAdjust="spacingAndGlyphs" >50</text>
<rect x="1570.25" y="486.90" width="1.5" height="6" fill="#e0e0e0"/>
<text x="1572.00" y="510.00" font-size="17.20" fill="#e2e2e2" text-anchor="middle" stroke="#e2e2e2" stroke-width="0.3" textLength="17.51" lengthAdjust="spacingAndGlyphs" >60</text>
<rect x="1631.25" y="486.90" width="1.5" height="6" fill="#e0e0e0"/>
<text x="1633.00" y="510.00" font-size="17.20" fill="#e2e2e2" text-anchor="middle" stroke="#e2e2e2" stroke-width="0.3" textLength="17.51" lengthAdjust="spacingAndGlyphs" >70</text>
<rect x="1692.15" y="486.90" width="1.5" height="6" fill="#e0e0e0"/>
<text x="1693.90" y="510.00" font-size="17.20" fill="#e2e2e2" text-anchor="middle" stroke="#e2e2e2" stroke-width="0.3" textLength="17.51" lengthAdjust="spacingAndGlyphs" >80</text>
<rect x="1753.25" y="486.90" width="1.5" height="6" fill="#e0e0e0"/>
<text x="1755.00" y="510.00" font-size="17.20" fill="#e2e2e2" text-anchor="middle" stroke="#e2e2e2" stroke-width="0.3" textLength="17.51" lengthAdjust="spacingAndGlyphs" >90</text>
<rect x="1813.85" y="486.90" width="1.5" height="6" fill="#e0e0e0"/>
<text x="1815.60" y="510.00" font-size="17.20" fill="#e2e2e2" text-anchor="middle" stroke="#e2e2e2" stroke-width="0.3" textLength="26.26" lengthAdjust="spacingAndGlyphs" >100</text>
<text x="1496.40" y="143.20" font-size="15.60" fill="#d4d4d4" text-anchor="middle" stroke="#d4d4d4" stroke-width="0.3" textLength="115.50" lengthAdjust="spacingAndGlyphs" >Gamma Log/Log</text>
</svg>
<!-- p3_strip -->
<div class="abs" style="left:77px;top:575px;width:1774.3px;height:139px;background:#000"></div>
<div class="abs" style="left:359.2px;top:581.4px;width:105.6px;height:109px;box-sizing:border-box;border:1.7px solid #f4f4f4;background:linear-gradient(#040507 0,#040507 49.4%,#030303 49.4%,#030303 100%)"></div>
<div class="t" style="left:408.17px;top:694.18px;font-size:14.20px;line-height:14.20px;color:#fff;-webkit-text-stroke:0.3px #fff;transform:scaleX(0.9700);">0</div>
<div class="abs" style="left:481.7px;top:581.4px;width:105.6px;height:109px;box-sizing:border-box;border:1.7px solid #f4f4f4;background:linear-gradient(#0e0e0e 0,#0e0e0e 49.4%,#1b1b1b 49.4%,#1b1b1b 100%)"></div>
<div class="t" style="left:526.84px;top:694.18px;font-size:14.20px;line-height:14.20px;color:#fff;-webkit-text-stroke:0.3px #fff;transform:scaleX(0.9700);">10</div>
<div class="abs" style="left:604.2px;top:581.4px;width:105.6px;height:109px;box-sizing:border-box;border:1.7px solid #f4f4f4;background:linear-gradient(#262624 0,#262624 49.4%,#353535 49.4%,#353535 100%)"></div>
<div class="t" style="left:649.34px;top:694.18px;font-size:14.20px;line-height:14.20px;color:#fff;-webkit-text-stroke:0.3px #fff;transform:scaleX(0.9700);">20</div>
<div class="abs" style="left:726.7px;top:581.4px;width:105.6px;height:109px;box-sizing:border-box;border:1.7px solid #f4f4f4;background:linear-gradient(#41413c 0,#41413c 49.4%,#4e4e4e 49.4%,#4e4e4e 100%)"></div>
<div class="t" style="left:771.84px;top:694.18px;font-size:14.20px;line-height:14.20px;color:#fff;-webkit-text-stroke:0.3px #fff;transform:scaleX(0.9700);">30</div>
<div class="abs" style="left:849.2px;top:581.4px;width:105.6px;height:109px;box-sizing:border-box;border:1.7px solid #f4f4f4;background:linear-gradient(#595a54 0,#595a54 49.4%,#686868 49.4%,#686868 100%)"></div>
<div class="t" style="left:894.34px;top:694.18px;font-size:14.20px;line-height:14.20px;color:#fff;-webkit-text-stroke:0.3px #fff;transform:scaleX(0.9700);">40</div>
<div class="abs" style="left:971.7px;top:581.4px;width:105.6px;height:109px;box-sizing:border-box;border:1.7px solid #f4f4f4;background:linear-gradient(#73746b 0,#73746b 49.4%,#828282 49.4%,#828282 100%)"></div>
<div class="t" style="left:1016.84px;top:694.18px;font-size:14.20px;line-height:14.20px;color:#fff;-webkit-text-stroke:0.3px #fff;transform:scaleX(0.9700);">50</div>
<div class="abs" style="left:1094.2px;top:581.4px;width:105.6px;height:109px;box-sizing:border-box;border:1.7px solid #f4f4f4;background:linear-gradient(#8c8d84 0,#8c8d84 49.4%,#9b9b9b 49.4%,#9b9b9b 100%)"></div>
<div class="t" style="left:1139.34px;top:694.18px;font-size:14.20px;line-height:14.20px;color:#fff;-webkit-text-stroke:0.3px #fff;transform:scaleX(0.9700);">60</div>
<div class="abs" style="left:1216.7px;top:581.4px;width:105.6px;height:109px;box-sizing:border-box;border:1.7px solid #f4f4f4;background:linear-gradient(#a6a79d 0,#a6a79d 49.4%,#b4b4b4 49.4%,#b4b4b4 100%)"></div>
<div class="t" style="left:1261.84px;top:694.18px;font-size:14.20px;line-height:14.20px;color:#fff;-webkit-text-stroke:0.3px #fff;transform:scaleX(0.9700);">70</div>
<div class="abs" style="left:1339.2px;top:581.4px;width:105.6px;height:109px;box-sizing:border-box;border:1.7px solid #f4f4f4;background:linear-gradient(#c1c4b6 0,#c1c4b6 49.4%,#cdcdcd 49.4%,#cdcdcd 100%)"></div>
<div class="t" style="left:1384.34px;top:694.18px;font-size:14.20px;line-height:14.20px;color:#fff;-webkit-text-stroke:0.3px #fff;transform:scaleX(0.9700);">80</div>
<div class="abs" style="left:1461.7px;top:581.4px;width:105.6px;height:109px;box-sizing:border-box;border:1.7px solid #f4f4f4;background:linear-gradient(#dcdfd1 0,#dcdfd1 49.4%,#e6e6e6 49.4%,#e6e6e6 100%)"></div>
<div class="t" style="left:1506.84px;top:694.18px;font-size:14.20px;line-height:14.20px;color:#fff;-webkit-text-stroke:0.3px #fff;transform:scaleX(0.9700);">90</div>
<div class="abs" style="left:1584.2px;top:581.4px;width:105.6px;height:109px;box-sizing:border-box;border:1.7px solid #f4f4f4;background:linear-gradient(#fbfff1 0,#fbfff1 49.4%,#fdfdfd 49.4%,#fdfdfd 100%)"></div>
<div class="t" style="left:1625.51px;top:694.18px;font-size:14.20px;line-height:14.20px;color:#fff;-webkit-text-stroke:0.3px #fff;transform:scaleX(0.9700);">100</div>
<div class="t" style="left:327.8px;top:597.9px;font-size:13.4px;line-height:13.4px;color:#fff;-webkit-text-stroke:.3px #fff;width:37.24px;text-align:center;transform-origin:50% 50%;transform:rotate(-90deg) scaleX(1.002)">Actual</div>
<div class="t" style="left:327.8px;top:659.6px;font-size:13.4px;line-height:13.4px;color:#fff;-webkit-text-stroke:.3px #fff;width:37.24px;text-align:center;transform-origin:50% 50%;transform:rotate(-90deg) scaleX(0.967)">Target</div>
<!-- p4_lower -->
<div class="t" style="left:91.90px;top:744.70px;font-size:30.60px;line-height:30.60px;color:#f7f7f7;-webkit-text-stroke:0.7px #f7f7f7;transform:scaleX(1.0466);">Current Reading</div>
<div class="t" style="left:91.70px;top:793.51px;font-size:26.80px;line-height:26.80px;color:#f7f7f7;-webkit-text-stroke:0.6px #f7f7f7;">x: 0,3166</div>
<div class="t" style="left:91.70px;top:836.91px;font-size:26.80px;line-height:26.80px;color:#f7f7f7;-webkit-text-stroke:0.6px #f7f7f7;">y: 0,3421</div>
<div class="t" style="left:91.70px;top:879.91px;font-size:26.80px;line-height:26.80px;color:#f7f7f7;-webkit-text-stroke:0.6px #f7f7f7;transform:scaleX(0.9848);">fL: 142,83</div>
<div class="t" style="left:91.70px;top:923.51px;font-size:26.80px;line-height:26.80px;color:#f7f7f7;-webkit-text-stroke:0.6px #f7f7f7;transform:scaleX(1.0387);">cd/m²: 489,38</div>
<div class="abs" style="left:424.8px;top:737.6px;width:311.6px;height:228px;box-sizing:border-box;border:7.2px solid #e9e9e9;background:#333"></div>
<div class="abs" style="left:472.2px;top:748.4px;width:253.6px;height:183.0px;overflow:hidden;box-shadow:0 0 0 1.3px #909090;background:radial-gradient(ellipse 60% 70% at 47% 54%,rgba(255,255,255,1) 0%,rgba(255,255,255,.82) 16%,rgba(255,255,255,.42) 50%,rgba(255,255,255,0) 100%),conic-gradient(from 0deg at 47% 54%,#b0ffb8 0deg,#e4ffc0 24deg,#fffdc0 38deg,#ffe4b0 54deg,#ffcab0 70deg,#ffb0b0 95deg,#ff94b6 122deg,#ffa2d4 148deg,#ffb8f2 172deg,#e0b8ff 198deg,#b8c0ff 222deg,#98ccff 240deg,#98f0ff 268deg,#8cffe8 292deg,#7cffc4 312deg,#98ffb8 338deg,#b0ffb8 360deg)"></div>
<svg class="abs" style="left:0;top:0" width="1920" height="1039" viewBox="0 0 1920 1039">
<clipPath id="cclip"><rect x="472.2" y="748.4" width="253.6" height="183.0"/></clipPath>
<path d="M504.4 931.6 Q 610 856 726.2 778.2" fill="none" stroke="#000" stroke-width="2.9" clip-path="url(#cclip)"/>
<circle cx="580.9" cy="829.2" r="4.9" fill="#141414"/>
<rect x="590.4" y="831.6" width="14.4" height="14.4" fill="#fff" stroke="#000" stroke-width="1.5"/>
<circle cx="622.2" cy="800.6" r="4.5" fill="#303030" stroke="#111" stroke-width="1.1"/>
<circle cx="628.6" cy="797.0" r="4.5" fill="#484848" stroke="#111" stroke-width="1.1"/>
<circle cx="627.6" cy="793.4" r="4.5" fill="#6a6a6a" stroke="#111" stroke-width="1.1"/>
<circle cx="628.2" cy="790.6" r="4.5" fill="#909090" stroke="#111" stroke-width="1.1"/>
<circle cx="626.8" cy="789.0" r="4.5" fill="#b8b8b8" stroke="#111" stroke-width="1.1"/>
<circle cx="616.6" cy="791.6" r="4.5" fill="#f4f4f4" stroke="#111" stroke-width="1.1"/>
<circle cx="625.6" cy="787.2" r="4.5" fill="#e6e6e6" stroke="#111" stroke-width="1.1"/>
<rect x="465.4" y="761.75" width="5.6" height="1.3" fill="#e0e0e0"/>
<text x="464.80" y="768.80" font-size="17.20" fill="#dedede" text-anchor="end" stroke="#dedede" stroke-width="0.3" textLength="29.63" lengthAdjust="spacingAndGlyphs" >0,35</text>
<rect x="465.4" y="799.55" width="5.6" height="1.3" fill="#e0e0e0"/>
<text x="464.80" y="806.60" font-size="17.20" fill="#dedede" text-anchor="end" stroke="#dedede" stroke-width="0.3" textLength="29.63" lengthAdjust="spacingAndGlyphs" >0,34</text>
<rect x="465.4" y="835.75" width="5.6" height="1.3" fill="#e0e0e0"/>
<text x="464.80" y="842.80" font-size="17.20" fill="#dedede" text-anchor="end" stroke="#dedede" stroke-width="0.3" textLength="29.63" lengthAdjust="spacingAndGlyphs" >0,33</text>
<rect x="465.4" y="871.95" width="5.6" height="1.3" fill="#e0e0e0"/>
<text x="464.80" y="879.00" font-size="17.20" fill="#dedede" text-anchor="end" stroke="#dedede" stroke-width="0.3" textLength="29.63" lengthAdjust="spacingAndGlyphs" >0,32</text>
<rect x="465.4" y="908.55" width="5.6" height="1.3" fill="#e0e0e0"/>
<text x="464.80" y="915.60" font-size="17.20" fill="#dedede" text-anchor="end" stroke="#dedede" stroke-width="0.3" textLength="29.63" lengthAdjust="spacingAndGlyphs" >0,31</text>
<rect x="481.50" y="932.6" width="1.4" height="5.4" fill="#e0e0e0"/>
<text x="482.20" y="954.20" font-size="17.20" fill="#dedede" text-anchor="middle" stroke="#dedede" stroke-width="0.3" textLength="29.63" lengthAdjust="spacingAndGlyphs" >0,29</text>
<rect x="532.10" y="932.6" width="1.4" height="5.4" fill="#e0e0e0"/>
<text x="532.80" y="954.20" font-size="17.20" fill="#dedede" text-anchor="middle" stroke="#dedede" stroke-width="0.3" textLength="21.16" lengthAdjust="spacingAndGlyphs" >0,3</text>
<rect x="582.90" y="932.6" width="1.4" height="5.4" fill="#e0e0e0"/>
<text x="583.60" y="954.20" font-size="17.20" fill="#dedede" text-anchor="middle" stroke="#dedede" stroke-width="0.3" textLength="29.63" lengthAdjust="spacingAndGlyphs" >0,31</text>
<rect x="633.60" y="932.6" width="1.4" height="5.4" fill="#e0e0e0"/>
<text x="634.30" y="954.20" font-size="17.20" fill="#dedede" text-anchor="middle" stroke="#dedede" stroke-width="0.3" textLength="29.63" lengthAdjust="spacingAndGlyphs" >0,32</text>
<rect x="684.30" y="932.6" width="1.4" height="5.4" fill="#e0e0e0"/>
<text x="685.00" y="954.20" font-size="17.20" fill="#dedede" text-anchor="middle" stroke="#dedede" stroke-width="0.3" textLength="29.63" lengthAdjust="spacingAndGlyphs" >0,33</text>
</svg>
<div class="abs" style="left:743.2px;top:723.0px;width:930.2px;height:223.3px;background:#0a0a0a"></div>
<div class="abs" style="left:744.8px;top:724.2px;width:927.0px;height:30.0px;background:linear-gradient(#343434 0,#2c2c2c 46%,#111 52%,#151515 100%)"></div>
<div class="t" style="left:941.48px;top:731.72px;font-size:16.40px;line-height:16.40px;color:#fff;transform:scaleX(0.9700);">0</div>
<div class="t" style="left:1010.55px;top:731.72px;font-size:16.40px;line-height:16.40px;color:#fff;transform:scaleX(0.9700);">10</div>
<div class="t" style="left:1079.21px;top:731.72px;font-size:16.40px;line-height:16.40px;color:#fff;transform:scaleX(0.9700);">20</div>
<div class="t" style="left:1147.87px;top:731.72px;font-size:16.40px;line-height:16.40px;color:#fff;transform:scaleX(0.9700);">30</div>
<div class="t" style="left:1216.53px;top:731.72px;font-size:16.40px;line-height:16.40px;color:#fff;transform:scaleX(0.9700);">40</div>
<div class="t" style="left:1285.19px;top:731.72px;font-size:16.40px;line-height:16.40px;color:#fff;transform:scaleX(0.9700);">50</div>
<div class="t" style="left:1353.85px;top:731.72px;font-size:16.40px;line-height:16.40px;color:#fff;transform:scaleX(0.9700);">60</div>
<div class="t" style="left:1422.51px;top:731.72px;font-size:16.40px;line-height:16.40px;color:#fff;transform:scaleX(0.9700);">70</div>
<div class="t" style="left:1491.17px;top:731.72px;font-size:16.40px;line-height:16.40px;color:#fff;transform:scaleX(0.9700);">80</div>
<div class="t" style="left:1559.83px;top:731.72px;font-size:16.40px;line-height:16.40px;color:#fff;transform:scaleX(0.9700);">90</div>
<div class="t" style="left:1624.07px;top:731.72px;font-size:16.40px;line-height:16.40px;color:#fff;transform:scaleX(0.9700);">100</div>
<div class="abs" style="left:744.8px;top:754.10px;width:927.0px;height:27.00px;background:linear-gradient(#434343,#3f3f3f)"></div>
<div class="t" style="left:757.60px;top:762.01px;font-size:16.60px;line-height:16.60px;color:#f4f4f4;font-weight:bold;transform:scaleX(0.9708);">x: CIE31</div>
<div class="t" style="left:911.20px;top:762.01px;font-size:16.60px;line-height:16.60px;color:#f0f0f0;">0,26</div>
<div class="t" style="left:989.30px;top:762.01px;font-size:16.60px;line-height:16.60px;color:#f0f0f0;">0,31</div>
<div class="t" style="left:1057.96px;top:762.01px;font-size:16.60px;line-height:16.60px;color:#f0f0f0;">0,32</div>
<div class="t" style="left:1126.62px;top:762.01px;font-size:16.60px;line-height:16.60px;color:#f0f0f0;">0,32</div>
<div class="t" style="left:1195.28px;top:762.01px;font-size:16.60px;line-height:16.60px;color:#f0f0f0;">0,32</div>
<div class="t" style="left:1263.94px;top:762.01px;font-size:16.60px;line-height:16.60px;color:#f0f0f0;">0,32</div>
<div class="t" style="left:1332.60px;top:762.01px;font-size:16.60px;line-height:16.60px;color:#f0f0f0;">0,32</div>
<div class="t" style="left:1401.26px;top:762.01px;font-size:16.60px;line-height:16.60px;color:#f0f0f0;">0,32</div>
<div class="t" style="left:1469.92px;top:762.01px;font-size:16.60px;line-height:16.60px;color:#f0f0f0;">0,32</div>
<div class="t" style="left:1538.58px;top:762.01px;font-size:16.60px;line-height:16.60px;color:#f0f0f0;">0,32</div>
<div class="t" style="left:1607.24px;top:762.01px;font-size:16.60px;line-height:16.60px;color:#f0f0f0;">0,32</div>
<div class="abs" style="left:744.8px;top:781.10px;width:927.0px;height:28.00px;background:linear-gradient(#858585,#7c7c7c)"></div>
<div class="t" style="left:757.60px;top:789.01px;font-size:16.60px;line-height:16.60px;color:#f4f4f4;font-weight:bold;transform:scaleX(0.9708);">y: CIE31</div>
<div class="t" style="left:911.20px;top:789.01px;font-size:16.60px;line-height:16.60px;color:#f0f0f0;">0,28</div>
<div class="t" style="left:989.30px;top:789.01px;font-size:16.60px;line-height:16.60px;color:#f0f0f0;">0,33</div>
<div class="t" style="left:1057.96px;top:789.01px;font-size:16.60px;line-height:16.60px;color:#f0f0f0;">0,34</div>
<div class="t" style="left:1126.62px;top:789.01px;font-size:16.60px;line-height:16.60px;color:#f0f0f0;">0,34</div>
<div class="t" style="left:1195.28px;top:789.01px;font-size:16.60px;line-height:16.60px;color:#f0f0f0;">0,34</div>
<div class="t" style="left:1263.94px;top:789.01px;font-size:16.60px;line-height:16.60px;color:#f0f0f0;">0,34</div>
<div class="t" style="left:1332.60px;top:789.01px;font-size:16.60px;line-height:16.60px;color:#f0f0f0;">0,34</div>
<div class="t" style="left:1401.26px;top:789.01px;font-size:16.60px;line-height:16.60px;color:#f0f0f0;">0,34</div>
<div class="t" style="left:1469.92px;top:789.01px;font-size:16.60px;line-height:16.60px;color:#f0f0f0;">0,34</div>
<div class="t" style="left:1538.58px;top:789.01px;font-size:16.60px;line-height:16.60px;color:#f0f0f0;">0,34</div>
<div class="t" style="left:1607.24px;top:789.01px;font-size:16.60px;line-height:16.60px;color:#f0f0f0;">0,34</div>
<div class="abs" style="left:744.8px;top:809.10px;width:927.0px;height:27.70px;background:linear-gradient(#434343,#3f3f3f)"></div>
<div class="t" style="left:757.60px;top:816.01px;font-size:16.60px;line-height:16.60px;color:#f4f4f4;font-weight:bold;transform:scaleX(0.9392);">Y</div>
<div class="t" style="left:911.20px;top:816.01px;font-size:16.60px;line-height:16.60px;color:#f0f0f0;">0,26</div>
<div class="t" style="left:989.30px;top:816.01px;font-size:16.60px;line-height:16.60px;color:#f0f0f0;">1,80</div>
<div class="t" style="left:1057.96px;top:816.01px;font-size:16.60px;line-height:16.60px;color:#f0f0f0;">9,31</div>
<div class="t" style="left:1126.62px;top:816.01px;font-size:16.60px;line-height:16.60px;color:#f0f0f0;">25,38</div>
<div class="t" style="left:1195.28px;top:816.01px;font-size:16.60px;line-height:16.60px;color:#f0f0f0;">48,14</div>
<div class="t" style="left:1263.94px;top:816.01px;font-size:16.60px;line-height:16.60px;color:#f0f0f0;">84,34</div>
<div class="t" style="left:1332.60px;top:816.01px;font-size:16.60px;line-height:16.60px;color:#f0f0f0;">129,23</div>
<div class="t" style="left:1401.26px;top:816.01px;font-size:16.60px;line-height:16.60px;color:#f0f0f0;">186,32</div>
<div class="t" style="left:1469.92px;top:816.01px;font-size:16.60px;line-height:16.60px;color:#f0f0f0;">265,86</div>
<div class="t" style="left:1538.58px;top:816.01px;font-size:16.60px;line-height:16.60px;color:#f0f0f0;">358,09</div>
<div class="t" style="left:1607.24px;top:816.01px;font-size:16.60px;line-height:16.60px;color:#f0f0f0;">489,38</div>
<div class="abs" style="left:744.8px;top:836.80px;width:927.0px;height:27.30px;background:linear-gradient(#858585,#7c7c7c)"></div>
<div class="t" style="left:757.60px;top:844.01px;font-size:16.60px;line-height:16.60px;color:#f4f4f4;font-weight:bold;transform:scaleX(1.0264);">Target Y</div>
<div class="t" style="left:911.20px;top:844.01px;font-size:16.60px;line-height:16.60px;color:#f0f0f0;">0,00</div>
<div class="t" style="left:989.30px;top:844.01px;font-size:16.60px;line-height:16.60px;color:#f0f0f0;">5,06</div>
<div class="t" style="left:1057.96px;top:844.01px;font-size:16.60px;line-height:16.60px;color:#f0f0f0;">16,20</div>
<div class="t" style="left:1126.62px;top:844.01px;font-size:16.60px;line-height:16.60px;color:#f0f0f0;">35,37</div>
<div class="t" style="left:1195.28px;top:844.01px;font-size:16.60px;line-height:16.60px;color:#f0f0f0;">65,02</div>
<div class="t" style="left:1263.94px;top:844.01px;font-size:16.60px;line-height:16.60px;color:#f0f0f0;">105,64</div>
<div class="t" style="left:1332.60px;top:844.01px;font-size:16.60px;line-height:16.60px;color:#f0f0f0;">155,89</div>
<div class="t" style="left:1401.26px;top:844.01px;font-size:16.60px;line-height:16.60px;color:#f0f0f0;">217,87</div>
<div class="t" style="left:1469.92px;top:844.01px;font-size:16.60px;line-height:16.60px;color:#f0f0f0;">295,50</div>
<div class="t" style="left:1538.58px;top:844.01px;font-size:16.60px;line-height:16.60px;color:#f0f0f0;">387,25</div>
<div class="t" style="left:1607.24px;top:844.01px;font-size:16.60px;line-height:16.60px;color:#f0f0f0;">489,38</div>
<div class="abs" style="left:744.8px;top:864.10px;width:927.0px;height:27.50px;background:linear-gradient(#434343,#3f3f3f)"></div>
<div class="t" style="left:757.60px;top:871.01px;font-size:16.60px;line-height:16.60px;color:#f4f4f4;font-weight:bold;transform:scaleX(1.0354);">Gamma Log/Log</div>
<div class="t" style="left:911.20px;top:871.01px;font-size:16.60px;line-height:16.60px;color:#f0f0f0;">1,28</div>
<div class="t" style="left:989.30px;top:871.01px;font-size:16.60px;line-height:16.60px;color:#f0f0f0;">2,45</div>
<div class="t" style="left:1057.96px;top:871.01px;font-size:16.60px;line-height:16.60px;color:#f0f0f0;">2,46</div>
<div class="t" style="left:1126.62px;top:871.01px;font-size:16.60px;line-height:16.60px;color:#f0f0f0;">2,44</div>
<div class="t" style="left:1195.28px;top:871.01px;font-size:16.60px;line-height:16.60px;color:#f0f0f0;">2,53</div>
<div class="t" style="left:1263.94px;top:871.01px;font-size:16.60px;line-height:16.60px;color:#f0f0f0;">2,55</div>
<div class="t" style="left:1332.60px;top:871.01px;font-size:16.60px;line-height:16.60px;color:#f0f0f0;">2,61</div>
<div class="t" style="left:1401.26px;top:871.01px;font-size:16.60px;line-height:16.60px;color:#f0f0f0;">2,69</div>
<div class="t" style="left:1469.92px;top:871.01px;font-size:16.60px;line-height:16.60px;color:#f0f0f0;">2,73</div>
<div class="t" style="left:1538.58px;top:871.01px;font-size:16.60px;line-height:16.60px;color:#f0f0f0;">3,03</div>
<div class="t" style="left:1607.24px;top:871.01px;font-size:16.60px;line-height:16.60px;color:#f0f0f0;">2,27</div>
<div class="abs" style="left:744.8px;top:891.60px;width:927.0px;height:27.60px;background:linear-gradient(#858585,#7c7c7c)"></div>
<div class="t" style="left:757.60px;top:899.01px;font-size:16.60px;line-height:16.60px;color:#f4f4f4;font-weight:bold;transform:scaleX(0.8969);">CCT</div>
<div class="t" style="left:911.20px;top:899.01px;font-size:16.60px;line-height:16.60px;color:#f0f0f0;">13612,00</div>
<div class="t" style="left:989.30px;top:899.01px;font-size:16.60px;line-height:16.60px;color:#f0f0f0;">6669,00</div>
<div class="t" style="left:1057.96px;top:899.01px;font-size:16.60px;line-height:16.60px;color:#f0f0f0;">6184,00</div>
<div class="t" style="left:1126.62px;top:899.01px;font-size:16.60px;line-height:16.60px;color:#f0f0f0;">6126,00</div>
<div class="t" style="left:1195.28px;top:899.01px;font-size:16.60px;line-height:16.60px;color:#f0f0f0;">6118,00</div>
<div class="t" style="left:1263.94px;top:899.01px;font-size:16.60px;line-height:16.60px;color:#f0f0f0;">6121,00</div>
<div class="t" style="left:1332.60px;top:899.01px;font-size:16.60px;line-height:16.60px;color:#f0f0f0;">6121,00</div>
<div class="t" style="left:1401.26px;top:899.01px;font-size:16.60px;line-height:16.60px;color:#f0f0f0;">6122,00</div>
<div class="t" style="left:1469.92px;top:899.01px;font-size:16.60px;line-height:16.60px;color:#f0f0f0;">6127,00</div>
<div class="t" style="left:1538.58px;top:899.01px;font-size:16.60px;line-height:16.60px;color:#f0f0f0;">6139,00</div>
<div class="t" style="left:1607.24px;top:899.01px;font-size:16.60px;line-height:16.60px;color:#f0f0f0;">6227,00</div>
<div class="abs" style="left:744.8px;top:919.20px;width:927.0px;height:27.00px;background:linear-gradient(#434343,#3f3f3f)"></div>
<div class="t" style="left:757.60px;top:926.01px;font-size:16.60px;line-height:16.60px;color:#f4f4f4;font-weight:bold;transform:scaleX(1.0287);">ΔE 2000</div>
<div class="t" style="left:911.20px;top:926.01px;font-size:16.60px;line-height:16.60px;color:#f0f0f0;">0,52</div>
<div class="t" style="left:989.30px;top:926.01px;font-size:16.60px;line-height:16.60px;color:#f0f0f0;">3,61</div>
<div class="t" style="left:1057.96px;top:926.01px;font-size:16.60px;line-height:16.60px;color:#f0f0f0;">4,56</div>
<div class="t" style="left:1126.62px;top:926.01px;font-size:16.60px;line-height:16.60px;color:#f0f0f0;">4,55</div>
<div class="t" style="left:1195.28px;top:926.01px;font-size:16.60px;line-height:16.60px;color:#f0f0f0;">5,81</div>
<div class="t" style="left:1263.94px;top:926.01px;font-size:16.60px;line-height:16.60px;color:#f0f0f0;">6,25</div>
<div class="t" style="left:1332.60px;top:926.01px;font-size:16.60px;line-height:16.60px;color:#f0f0f0;">6,09</div>
<div class="t" style="left:1401.26px;top:926.01px;font-size:16.60px;line-height:16.60px;color:#f0f0f0;">6,23</div>
<div class="t" style="left:1469.92px;top:926.01px;font-size:16.60px;line-height:16.60px;color:#f0f0f0;">6,44</div>
<div class="t" style="left:1538.58px;top:926.01px;font-size:16.60px;line-height:16.60px;color:#f0f0f0;">6,96</div>
<div class="t" style="left:1607.24px;top:926.01px;font-size:16.60px;line-height:16.60px;color:#f0f0f0;">7,33</div>
<!-- p5_bottom -->
<div class="abs" style="left:0;top:968.4px;width:1920px;height:70.6px;background:#3b3b3b"></div>
<div class="pb" style="left:1.0px"></div>
<div class="sw" style="left:7.1px;background:#000000"></div>
<div class="t" style="left:67.89px;top:1023.72px;font-size:11.20px;line-height:11.20px;color:#1e1e1e;font-weight:bold;">0</div>
<div class="pb" style="left:143.0px"></div>
<div class="sw" style="left:149.1px;background:#1c1c1c"></div>
<div class="t" style="left:206.73px;top:1023.72px;font-size:11.20px;line-height:11.20px;color:#1e1e1e;font-weight:bold;">10</div>
<div class="pb" style="left:284.9px"></div>
<div class="sw" style="left:291.0px;background:#333333"></div>
<div class="t" style="left:348.69px;top:1023.72px;font-size:11.20px;line-height:11.20px;color:#1e1e1e;font-weight:bold;">20</div>
<div class="pb" style="left:426.9px"></div>
<div class="sw" style="left:433.0px;background:#4d4d4d"></div>
<div class="t" style="left:490.65px;top:1023.72px;font-size:11.20px;line-height:11.20px;color:#1e1e1e;font-weight:bold;">30</div>
<div class="pb" style="left:568.8px"></div>
<div class="sw" style="left:574.9px;background:#666666"></div>
<div class="t" style="left:632.61px;top:1023.72px;font-size:11.20px;line-height:11.20px;color:#1e1e1e;font-weight:bold;">40</div>
<div class="pb" style="left:710.8px"></div>
<div class="sw" style="left:716.9px;background:#808080"></div>
<div class="t" style="left:774.57px;top:1023.72px;font-size:11.20px;line-height:11.20px;color:#1e1e1e;font-weight:bold;">50</div>
<div class="pb" style="left:852.8px"></div>
<div class="sw" style="left:858.9px;background:#999999"></div>
<div class="t" style="left:916.53px;top:1023.72px;font-size:11.20px;line-height:11.20px;color:#1e1e1e;font-weight:bold;">60</div>
<div class="pb" style="left:994.7px"></div>
<div class="sw" style="left:1000.8px;background:#b3b3b3"></div>
<div class="t" style="left:1058.49px;top:1023.72px;font-size:11.20px;line-height:11.20px;color:#1e1e1e;font-weight:bold;">70</div>
<div class="pb" style="left:1136.7px"></div>
<div class="sw" style="left:1142.8px;background:#cccccc"></div>
<div class="t" style="left:1200.45px;top:1023.72px;font-size:11.20px;line-height:11.20px;color:#1e1e1e;font-weight:bold;">80</div>
<div class="pb" style="left:1278.6px"></div>
<div class="sw" style="left:1284.7px;background:#e6e6e6"></div>
<div class="t" style="left:1342.41px;top:1023.72px;font-size:11.20px;line-height:11.20px;color:#1e1e1e;font-weight:bold;">90</div>
<div class="pb sel" style="left:1420.6px"></div>
<div class="sw" style="left:1426.7px;background:#ffffff"></div>
<div class="t" style="left:1481.26px;top:1023.72px;font-size:11.20px;line-height:11.20px;color:#fff;font-weight:bold;">100</div>
<div class="cb" style="left:1563.4px;top:969.2px;width:54px;height:20.4px;border-radius:5px 5px 0 0"></div>
<div class="cc" style="left:1582px;top:971px;width:17px;height:17px"></div>
<svg class="abs" style="left:1582px;top:971px" width="17" height="17"><path d="M3.6 10.4h9.8l-4.9-4.6z" fill="#2a2a2a"/></svg>
<div class="cb" style="left:1563.4px;top:990.6px;width:54px;height:48.4px;border-radius:0 0 4px 4px;background:linear-gradient(#8a8a8a,#6e6e6e 50%,#5c5c5c)"></div>
<div class="abs" style="left:1573.2px;top:996.6px;width:34px;height:34.6px;box-sizing:border-box;border:2.6px solid #1c1c1c;border-radius:5px;background:linear-gradient(#b4b4b4 0,#a8a8a8 49%,#8e8e8e 50%,#9a9a9a 100%)"></div>
<div class="abs" style="left:1582.8px;top:1006.6px;width:15.2px;height:15px;background:linear-gradient(#1c1c1c 0,#161616 49%,#000 50%,#000 100%)"></div>
<div class="cb" style="left:1619.2px;top:969.2px;width:51.0px;height:33.6px;border-radius:5px 0 0 0;background:linear-gradient(#a8a8a8 0,#999 8%,#858585 50%,#6c6c6c 100%)"></div>
<div class="cc" style="left:1633.9px;top:975.2px;width:22px;height:22px"></div>
<svg class="abs" style="left:1633.9px;top:975.2px" width="22" height="22" viewBox="-11 -11 22 22"><rect x="-4.4" y="-4.4" width="8.8" height="8.8" fill="#303030"/></svg>
<div class="cb" style="left:1671.6px;top:969.2px;width:49.8px;height:33.6px;border-radius:0;background:linear-gradient(#a8a8a8 0,#999 8%,#858585 50%,#6c6c6c 100%)"></div>
<div class="cc" style="left:1685.7px;top:975.2px;width:22px;height:22px"></div>
<svg class="abs" style="left:1685.7px;top:975.2px" width="22" height="22" viewBox="-11 -11 22 22"><path d="M-3.6 -5.2L5.4 0L-3.6 5.2z" fill="#303030"/></svg>
<div class="cb" style="left:1722.8px;top:969.2px;width:49.2px;height:33.6px;border-radius:0;background:linear-gradient(#a8a8a8 0,#999 8%,#858585 50%,#6c6c6c 100%)"></div>
<div class="cc" style="left:1736.6px;top:975.2px;width:22px;height:22px"></div>
<svg class="abs" style="left:1736.6px;top:975.2px" width="22" height="22" viewBox="-11 -11 22 22"><path d="M-3.2 -5.6h-2.8v11.2h2.8M3.2 -5.6h2.8v11.2h-2.8" fill="none" stroke="#303030" stroke-width="1.7"/><path d="M-2.4 0h4.8" stroke="#303030" stroke-width="1.6" stroke-dasharray="1.4 1.2"/></svg>
<div class="cb" style="left:1773.4px;top:969.2px;width:49.6px;height:33.6px;border-radius:0;background:linear-gradient(#a8a8a8 0,#999 8%,#858585 50%,#6c6c6c 100%)"></div>
<div class="cc" style="left:1787.4px;top:975.2px;width:22px;height:22px"></div>
<svg class="abs" style="left:1787.4px;top:975.2px" width="22" height="22" viewBox="-11 -11 22 22"><path d="M0 0C-1.6 -2.6 -3 -3.4 -4.4 -3.4a3.4 3.4 0 0 0 0 6.8C-3 3.4 -1.6 2.6 0 0C1.6 -2.6 3 -3.4 4.4 -3.4a3.4 3.4 0 0 1 0 6.8C3 3.4 1.6 2.6 0 0z" fill="none" stroke="#303030" stroke-width="1.8"/></svg>
<div class="cb" style="left:1824.4px;top:969.2px;width:48.4px;height:33.6px;border-radius:0;background:linear-gradient(#a8a8a8 0,#999 8%,#858585 50%,#6c6c6c 100%)"></div>
<div class="cc" style="left:1837.8px;top:975.2px;width:22px;height:22px"></div>
<svg class="abs" style="left:1837.8px;top:975.2px" width="22" height="22" viewBox="-11 -11 22 22"><path d="M-5.4 -0.6A5.5 5.5 0 0 1 3.6 -4.2" fill="none" stroke="#303030" stroke-width="2"/><path d="M5.6 -6.6v5h-5z" fill="#303030"/><path d="M5.4 0.6A5.5 5.5 0 0 1 -3.6 4.2" fill="none" stroke="#303030" stroke-width="2"/><path d="M-5.6 6.6v-5h5z" fill="#303030"/></svg>
<div class="abs" style="left:1874.2px;top:969.2px;width:45.8px;height:33.6px;background:linear-gradient(#2c2c2c,#3a3a3a)"></div>
<div class="abs" style="left:1889.4px;top:975px;width:22px;height:22px;border-radius:50%;background:linear-gradient(#222,#333)"></div>
<div class="cb" style="left:1619.2px;top:1004.2px;width:152.8px;height:34.8px;border-radius:5px 0 0 4px;background:linear-gradient(#b0b0b0 0,#a2a2a2 8%,#909090 50%,#7a7a7a 100%)"></div>
<div class="cb" style="left:1773.2px;top:1004.2px;width:146.8px;height:34.8px;background:linear-gradient(#b0b0b0 0,#a2a2a2 8%,#909090 50%,#7a7a7a 100%)"></div>
<div class="cc" style="left:1642.2px;top:1010px;width:22px;height:22px;background:linear-gradient(#7c7c7c,#b0b0b0)"></div>
<svg class="abs" style="left:1642.2px;top:1010px" width="22" height="22" viewBox="-11 -11 22 22"><path d="M-0.6 -4.6L-4.8 0L-0.6 4.6M4.2 -4.6L0 0L4.2 4.6" fill="none" stroke="#3a3a3a" stroke-width="1.7"/></svg>
<div class="cc" style="left:1883.8px;top:1010px;width:22px;height:22px;background:linear-gradient(#7c7c7c,#b0b0b0)"></div>
<svg class="abs" style="left:1883.8px;top:1010px" width="22" height="22" viewBox="-11 -11 22 22"><path d="M0.6 -4.6L4.8 0L0.6 4.6M-4.2 -4.6L0 0L-4.2 4.6" fill="none" stroke="#3a3a3a" stroke-width="1.7"/></svg>
<div class="t" style="left:1684.40px;top:1009.75px;font-size:24.40px;line-height:24.40px;color:#2e2e2e;-webkit-text-stroke:0.9px #2e2e2e;transform:scaleX(1.0471);text-shadow:0 1px 1px rgba(255,255,255,.15);">Back</div>
<div class="t" style="left:1805.00px;top:1009.75px;font-size:24.40px;line-height:24.40px;color:#2e2e2e;-webkit-text-stroke:0.9px #2e2e2e;transform:scaleX(1.1561);text-shadow:0 1px 1px rgba(255,255,255,.15);">Next</div>
</body></html>
